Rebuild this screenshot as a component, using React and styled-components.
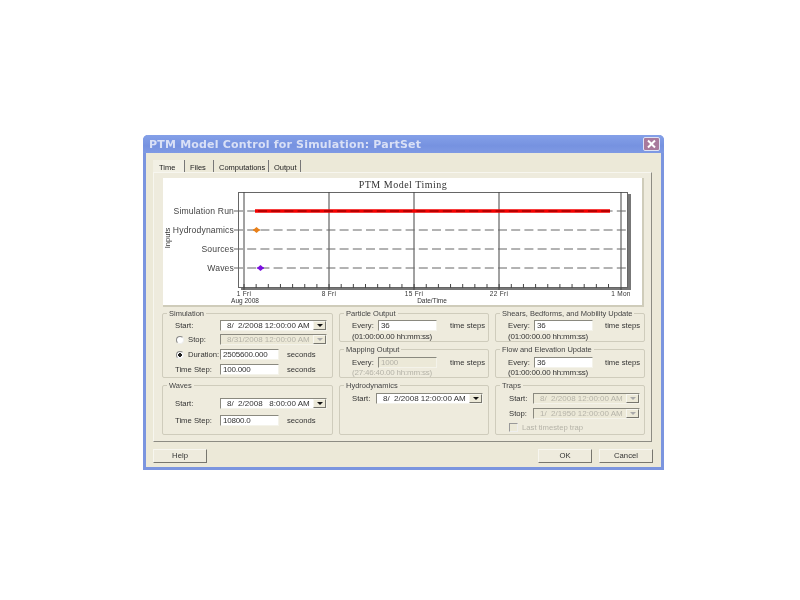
import styled, { createGlobalStyle } from "styled-components";

const Global = createGlobalStyle`
  html, body { margin: 0; padding: 0; background: #fff; }
  body { font-family: "Liberation Sans", Arial, sans-serif; }
`;

const Win = styled.div`
  width: 521px;
  height: 335px;
  margin: 135px 0 0 143px;
  box-sizing: border-box;
  background: #ece9d8;
  border: solid #7b95df;
  border-width: 0 3px 3px 3px;
  border-radius: 5px 5px 0 0;
  display: flex;
  flex-direction: column;
  filter: blur(0.45px);
  color: #333;
  font-size: 7.7px;
`;
const TitleBar = styled.div`
  height: 18px;
  margin: 0 -3px;
  padding: 0 4px 0 6px;
  flex: none;
  display: flex;
  align-items: center;
  justify-content: space-between;
  background: linear-gradient(#84a0e8, #7692e0 60%, #7f9ae4);
  border-radius: 5px 5px 0 0;
  color: #d9e0f6;
  font: bold 11px "DejaVu Sans", sans-serif;
  letter-spacing: 0.2px;
`;
const CloseBtn = styled.div`
  width: 17px;
  height: 14px;
  background: #a87a9c;
  border: 1px solid #dfe3f5;
  border-radius: 2px;
  box-sizing: border-box;
  display: flex;
  align-items: center;
  justify-content: center;
`;
const Tabs = styled.div`
  display: flex;
  height: 12px;
  margin: 7px 0 0 7px;
  flex: none;
`;
const Tab = styled.div`
  width: ${(p) => p.$w}px;
  margin-right: 2px;
  padding-left: ${(p) => (p.$active ? 6 : 3)}px;
  box-sizing: border-box;
  line-height: 15px;
  font-size: 7.5px;
  color: #222;
  border-right: 1px solid #777;
  ${(p) => p.$active && "background: #f2f0e4; height: 14px;"}
`;
const Pane = styled.div`
  width: 499px;
  height: 270px;
  margin-left: 7px;
  padding: 5px 0 0 9px;
  box-sizing: border-box;
  flex: none;
  background: #eeebdd;
  border: 1px solid;
  border-color: #f7f6ef #8d8c83 #8d8c83 #f7f6ef;
`;
const ChartBox = styled.div`
  width: 479px;
  height: 127px;
  background: #fff;
  border-right: 2px solid #cfccba;
  border-bottom: 2px solid #cfccba;
  box-sizing: content-box;
  margin-bottom: 6px;
  svg { display: block; }
`;
const Groups = styled.div`
  display: grid;
  grid-template-columns: 171px 150px 150px;
  grid-template-rows: 29px 29px 50px;
  gap: 7px 6px;
  margin-left: -1px;
`;
const Group = styled.div`
  position: relative;
  border: 1px solid #cfccbc;
  border-radius: 2px;
  box-sizing: border-box;
  padding-left: ${(p) => p.$pad || 12}px;
  grid-row: ${(p) => p.$span || "auto"};
  display: flex;
  flex-direction: column;
`;
const Legend = styled.span`
  position: absolute;
  top: -5px;
  left: 4px;
  padding: 0 2px;
  background: #eeebdd;
  line-height: 10px;
  font-size: 7.5px;
  white-space: nowrap;
  color: ${(p) => (p.$dis ? "#aaa" : "#444")};
`;
const Row = styled.div`
  display: flex;
  align-items: center;
  flex: none;
  height: ${(p) => p.$h || 11}px;
  margin-top: ${(p) => p.$top || 0}px;
  color: ${(p) => (p.$dis ? "#b5b3a8" : "inherit")};
`;
const Label = styled.span`
  width: ${(p) => p.$w || 45}px;
  flex: none;
  display: flex;
  align-items: center;
  white-space: nowrap;
`;
const Field = styled.div`
  width: 59px;
  height: 11px;
  flex: none;
  box-sizing: border-box;
  padding-left: 2px;
  line-height: 9px;
  border: 1px solid;
  border-color: #8a897f #f4f3ea #f4f3ea #8a897f;
  background: ${(p) => (p.$dis ? "#ece9d8" : "#fff")};
  color: ${(p) => (p.$dis ? "#b5b3a8" : "#333")};
  font-size: 8px;
  letter-spacing: -0.2px;
`;
const Unit = styled.span`
  margin-left: ${(p) => p.$ml || 8}px;
  white-space: nowrap;
`;
const Combo = styled.div`
  width: 107px;
  height: 11px;
  flex: none;
  box-sizing: border-box;
  display: flex;
  align-items: center;
  justify-content: space-between;
  padding-left: 6px;
  border: 1px solid;
  border-color: #8a897f #f4f3ea #f4f3ea #8a897f;
  background: ${(p) => (p.$dis ? "#ece9d8" : "#fff")};
  color: ${(p) => (p.$dis ? "#b5b3a8" : "#333")};
  font-size: 8px;
  white-space: pre;
`;
const ComboBtn = styled.span`
  width: 13px;
  height: 9px;
  background: #ece9d8;
  border: 1px solid;
  border-color: #f7f6ef #77766e #77766e #f7f6ef;
  box-sizing: border-box;
  display: flex;
  align-items: center;
  justify-content: center;
  &::after {
    content: "";
    border: solid transparent;
    border-width: 3px 3px 0 3px;
    border-top-color: ${(p) => (p.$dis ? "#aaa" : "#111")};
  }
`;
const Radio = styled.span`
  width: 8px;
  height: 8px;
  margin: 0 4px 0 1px;
  border-radius: 50%;
  box-sizing: border-box;
  border: 1px solid;
  border-color: #888 #eee #eee #888;
  background: ${(p) => (p.$on ? "radial-gradient(#222 45%, #fff 50%)" : "#fff")};
`;
const Check = styled.span`
  width: 9px;
  height: 9px;
  margin-right: 4px;
  box-sizing: border-box;
  border: 1px solid;
  border-color: #999 #eee #eee #999;
  background: #ece9d8;
`;
const TimeNote = styled.span`
  font-size: 8px;
  letter-spacing: -0.2px;
`;
const Footer = styled.div`
  display: flex;
  justify-content: space-between;
  margin: 7px 8px 0 7px;
`;
const Right = styled.div`
  display: flex;
  gap: 7px;
`;
const Btn = styled.div`
  width: 54px;
  height: 14px;
  box-sizing: border-box;
  text-align: center;
  line-height: 12px;
  background: #eeebdd;
  border: 1px solid;
  border-color: #f7f6ef #77766e #77766e #f7f6ef;
`;

const Combobox = ({ value, dis }) => (
  <Combo $dis={dis}>
    {value}
    <ComboBtn $dis={dis} />
  </Combo>
);

const rows = [
  ["Simulation Run", 211],
  ["Hydrodynamics", 230],
  ["Sources", 249],
  ["Waves", 268],
];
const majors = [244, 329, 414, 499, 621];
const dayTicks = Array.from({ length: 31 }, (_, i) => 244 + i * 12.15);
const xLabels = [
  ["1 Fri", 244],
  ["8 Fri", 329],
  ["15 Fri", 414],
  ["22 Fri", 499],
  ["1 Mon", 621],
];

function Chart() {
  return (
    <svg width="479" height="127" viewBox="163 178 479 127" fontFamily="Liberation Sans, sans-serif">
      <text x="403" y="188" fontSize="10" fontFamily="Liberation Serif, serif" textAnchor="middle" fill="#333" letterSpacing="0.5">
        PTM Model Timing
      </text>
      <rect x="628" y="194" width="3" height="96" fill="#777" />
      <rect x="241" y="288" width="390" height="2" fill="#777" />
      <rect x="238.5" y="192.5" width="389" height="95" fill="#fff" stroke="#666" />
      {majors.map((x) => (
        <line key={x} x1={x} x2={x} y1="192" y2="290" stroke="#444" />
      ))}
      {dayTicks.map((x) => (
        <line key={x} x1={x} x2={x} y1="284" y2="288" stroke="#444" />
      ))}
      {rows.map(([name, y]) => (
        <g key={name}>
          <line x1="234" x2="627" y1={y} y2={y} stroke="#666" strokeDasharray="9 4.2" />
          <text x="234" y={y + 3} fontSize="8.6" textAnchor="end" fill="#444" letterSpacing="0.15">
            {name}
          </text>
        </g>
      ))}
      <line x1="255" x2="610" y1="211" y2="211" stroke="#f40000" strokeWidth="3.4" />
      <line x1="258" x2="610" y1="211" y2="211" stroke="#700000" strokeWidth="0.9" strokeDasharray="9 4.2" />
      <path d="M256.5 227l3.5 3-3.5 3-3.5-3z" fill="#e8801a" />
      <path d="M253 230h7" stroke="#e8801a" strokeWidth="1.2" />
      <path d="M260.5 265l3.5 3-3.5 3-3.5-3z" fill="#7a10e0" />
      <path d="M257 268h7" stroke="#7a10e0" strokeWidth="1.2" />
      <text transform="translate(170 238) rotate(-90)" fontSize="7.5" textAnchor="middle" fill="#333">
        Inputs
      </text>
      {xLabels.map(([t, x]) => (
        <text key={t} x={x} y="296" fontSize="6.5" textAnchor="middle" fill="#333" letterSpacing="0.3">
          {t}
        </text>
      ))}
      <text x="245" y="302.5" fontSize="6.5" textAnchor="middle" fill="#333">
        Aug 2008
      </text>
      <text x="432" y="302.5" fontSize="6.5" textAnchor="middle" fill="#333">
        Date/Time
      </text>
    </svg>
  );
}

export default function App() {
  return (
    <>
      <Global />
      <Win>
        <TitleBar>
          PTM Model Control for Simulation: PartSet
          <CloseBtn>
            <svg width="11" height="10" viewBox="0 0 11 10">
              <path d="M2 1.5l7 7M9 1.5l-7 7" stroke="#fff" strokeWidth="2" />
            </svg>
          </CloseBtn>
        </TitleBar>
        <Tabs>
          <Tab $active $w={32}>Time</Tab>
          <Tab $w={27}>Files</Tab>
          <Tab $w={53}>Computations</Tab>
          <Tab $w={30}>Output</Tab>
        </Tabs>
        <Pane>
          <ChartBox>
            <Chart />
          </ChartBox>
          <Groups>
            <Group $span="1 / span 2">
              <Legend>Simulation</Legend>
              <Row $top={6}>
                <Label>Start:</Label>
                <Combobox value="8/  2/2008 12:00:00 AM" />
              </Row>
              <Row $top={3}>
                <Label><Radio />Stop:</Label>
                <Combobox value="8/31/2008 12:00:00 AM" dis />
              </Row>
              <Row $top={4}>
                <Label><Radio $on />Duration:</Label>
                <Field>2505600.000</Field>
                <Unit>seconds</Unit>
              </Row>
              <Row $top={4}>
                <Label>Time Step:</Label>
                <Field>100.000</Field>
                <Unit>seconds</Unit>
              </Row>
            </Group>
            <Group>
              <Legend>Particle Output</Legend>
              <Row $top={6}>
                <Label $w={26}>Every:</Label>
                <Field>36</Field>
                <Unit $ml={13}>time steps</Unit>
              </Row>
              <Row $h={10}><TimeNote>(01:00:00.00 hh:mm:ss)</TimeNote></Row>
            </Group>
            <Group>
              <Legend>Shears, Bedforms, and Mobility Update</Legend>
              <Row $top={6}>
                <Label $w={26}>Every:</Label>
                <Field>36</Field>
                <Unit $ml={12}>time steps</Unit>
              </Row>
              <Row $h={10}><TimeNote>(01:00:00.00 hh:mm:ss)</TimeNote></Row>
            </Group>
            <Group>
              <Legend>Mapping Output</Legend>
              <Row $top={7}>
                <Label $w={26}>Every:</Label>
                <Field $dis>1000</Field>
                <Unit $ml={13}>time steps</Unit>
              </Row>
              <Row $h={9} $dis><TimeNote>(27:46:40.00 hh:mm:ss)</TimeNote></Row>
            </Group>
            <Group>
              <Legend>Flow and Elevation Update</Legend>
              <Row $top={7}>
                <Label $w={26}>Every:</Label>
                <Field>36</Field>
                <Unit $ml={12}>time steps</Unit>
              </Row>
              <Row $h={9}><TimeNote>(01:00:00.00 hh:mm:ss)</TimeNote></Row>
            </Group>
            <Group>
              <Legend>Waves</Legend>
              <Row $top={12}>
                <Label>Start:</Label>
                <Combobox value="8/  2/2008   8:00:00 AM" />
              </Row>
              <Row $top={6}>
                <Label>Time Step:</Label>
                <Field>10800.0</Field>
                <Unit>seconds</Unit>
              </Row>
            </Group>
            <Group>
              <Legend>Hydrodynamics</Legend>
              <Row $top={7}>
                <Label $w={24}>Start:</Label>
                <Combobox value="8/  2/2008 12:00:00 AM" />
              </Row>
            </Group>
            <Group $pad={13}>
              <Legend>Traps</Legend>
              <Row $top={7}>
                <Label $w={24}>Start:</Label>
                <Combobox value="8/  2/2008 12:00:00 AM" dis />
              </Row>
              <Row $top={4}>
                <Label $w={24}>Stop:</Label>
                <Combobox value="1/  2/1950 12:00:00 AM" dis />
              </Row>
              <Row $top={3} $dis>
                <Check />Last timestep trap
              </Row>
            </Group>
          </Groups>
        </Pane>
        <Footer>
          <Btn>Help</Btn>
          <Right>
            <Btn>OK</Btn>
            <Btn>Cancel</Btn>
          </Right>
        </Footer>
      </Win>
    </>
  );
}
